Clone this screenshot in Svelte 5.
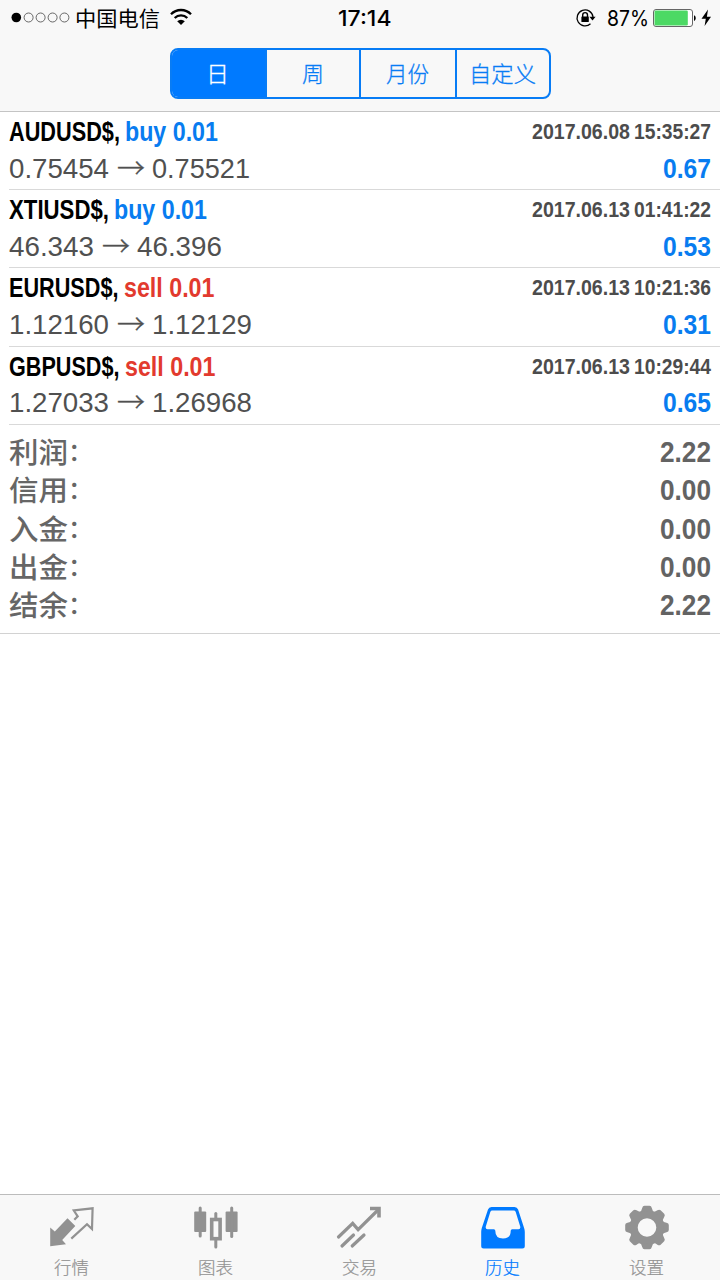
<script>
  const periods = [
    { label: '日', active: true, w: 23 },
    { label: '周', w: 22 },
    { label: '月份', w: 43 },
    { label: '自定义', w: 67 }
  ];
  const deals = [
    { symbol: 'AUDUSD$', side: 'buy', lot: '0.01', open: '0.75454', close: '0.75521', time: '2017.06.08 15:35:27', profit: '0.67', tw: 111, sw: 93, ow: 100, cw: 98, h: 78 },
    { symbol: 'XTIUSD$', side: 'buy', lot: '0.01', open: '46.343', close: '46.396', time: '2017.06.13 01:41:22', profit: '0.53', tw: 100, sw: 93, ow: 85, cw: 85, h: 78 },
    { symbol: 'EURUSD$', side: 'sell', lot: '0.01', open: '1.12160', close: '1.12129', time: '2017.06.13 10:21:36', profit: '0.31', tw: 109.5, sw: 90.5, ow: 100, cw: 100, h: 78.5 },
    { symbol: 'GBPUSD$', side: 'sell', lot: '0.01', open: '1.27033', close: '1.26968', time: '2017.06.13 10:29:44', profit: '0.65', tw: 110.5, sw: 90.5, ow: 100, cw: 100, h: 78.5 }
  ];
  const totals = [
    ['利润', '2.22'],
    ['信用', '0.00'],
    ['入金', '0.00'],
    ['出金', '0.00'],
    ['结余', '2.22']
  ];
  const tabs = [
    { id: 'quotes', label: '行情' },
    { id: 'chart', label: '图表' },
    { id: 'trade', label: '交易' },
    { id: 'history', label: '历史' },
    { id: 'settings', label: '设置' }
  ];
  const teeth = [0, 45, 90, 135, 180, 225, 270, 315];

  // Condenses a line of text horizontally so that it fills the given width.
  function condense(node, width) {
    const natural = node.getComputedTextLength();
    if (natural > 0) node.setAttribute('transform', `scale(${width / natural} 1)`);
  }
</script>

{#snippet fit(text, w, h, base, cls)}
  <svg class={cls} width={w} height={h}>
    <text x="0" y={base} use:condense={w}>{text}</text>
  </svg>
{/snippet}

<div class="screen">
  <header>
    <div class="status">
      <div class="side left">
        <svg width="60" height="36">
          <circle cx="5.3" cy="17.5" r="4.8" fill="#000" />
          {#each [17.6, 29.6, 41.6, 53.4] as x}
            <circle cx={x} cy="17.5" r="4.5" fill="none" stroke="#444" stroke-width=".8" />
          {/each}
        </svg>
        {@render fit('中国电信', 85, 36, 26, 'carrier')}
        <svg class="wifi" width="22" height="36" fill="none" stroke="#000" stroke-width="2.3">
          <path d="M1 14.2a14 14 0 0 1 20 0" />
          <path d="M4.7 18a8.9 8.9 0 0 1 12.6 0" />
          <path d="M7.2 21.2a5.4 5.4 0 0 1 7.6 0L11 25z" fill="#000" stroke="none" />
        </svg>
      </div>
      {@render fit('17:14', 53.5, 36, 26, 'clock')}
      <div class="side right">
        <svg width="20" height="36" fill="none" stroke="#000" stroke-width="1.3">
          <path d="M14.5 23.8A8 8 0 1 1 17 17" />
          <path d="M13.4 16.8h6.2l-3.1 3.8z" fill="#000" stroke="none" />
          <rect x="5.4" y="16.5" width="7.4" height="5.6" rx=".6" fill="#000" stroke="none" />
          <path d="M6.7 17v-2a2.4 2.4 0 0 1 4.8 0v2" stroke-width="1.4" />
        </svg>
        {@render fit('87%', 42, 36, 26, 'percent')}
        <svg class="battery" width="43" height="36">
          <rect x=".5" y="9.5" width="39" height="17" rx="2.5" fill="#fff" stroke="#666" />
          <rect x="1.5" y="10.5" width="33.3" height="15" rx="1.3" fill="#4cd964" />
          <path d="M41 15.2c2.3.7 2.3 5 0 5.7z" fill="#000" />
        </svg>
        <svg class="bolt" width="11" height="36"><path d="M7 9.5.5 18.8H4.8L3.6 26 10 16.7H5.9z" fill="#000" /></svg>
      </div>
    </div>
    <div class="segments">
      {#each periods as p}
        <div class="segment" class:active={p.active}>{@render fit(p.label, p.w, 46, 32, 'seg-label')}</div>
      {/each}
    </div>
  </header>

  <main>
    {#each deals as d}
      <div class="deal" style="height:{d.h}px">
        <div class="line top">
          <div class="heading">
            {@render fit(d.symbol + ',', d.tw, 38, 29.1, 'title')}
            {@render fit(d.side + ' ' + d.lot, d.sw, 38, 29.1, 'title ' + d.side)}
          </div>
          <div class="stamp">
            {@render fit(d.time.slice(0, 10), 98, 38, 27, 'time')}
            {@render fit(d.time.slice(11), 77, 38, 27, 'time')}
          </div>
        </div>
        <div class="line">
          <div class="prices">
            {@render fit(d.open, d.ow, 38, 27.8, 'price')}
            <svg class="arrow" width="28" height="38"><text x="0" y="29.2">→</text></svg>
            {@render fit(d.close, d.cw, 38, 27.8, 'price')}
          </div>
          {@render fit(d.profit, 48, 38, 27.8, 'profit')}
        </div>
      </div>
    {/each}
    <div class="totals">
      {#each totals as [name, value]}
        <div class="total">
          <div class="name">
            {@render fit(name, 59, 38, 28.2, 'label')}
            {@render fit('：', 25, 38, 26.2, 'label colon')}
          </div>
          {@render fit(value, 51, 38, 27.4, 'sum')}
        </div>
      {/each}
    </div>
  </main>

  <nav>
    {#each tabs as t}
      <div class="tab" class:selected={t.id === 'history'}>
        <svg width="46" height="46" viewBox="0 0 46 46">
          {#if t.id === 'quotes'}
            <path d="M1.2 23.5 5.8 27.4 18.5 14.3 26.3 22 13.2 36 17 40.2 1.2 42.3z" fill="currentColor" />
            <path d="M25.3 15.8 28.7 12.3 24.8 6.5 43.6 4.3 43 25 38 20.2 22.3 34.6" fill="none" stroke="currentColor" stroke-width="2.2" />
          {:else if t.id === 'chart'}
            <g fill="currentColor">
              <rect x="1.2" y="7.5" width="12" height="20.5" rx="1" />
              <rect x="5.7" y="2.5" width="3" height="31" rx="1.5" />
              <rect x="32.6" y="7.5" width="12" height="20.5" rx="1" />
              <rect x="37.2" y="2.5" width="3" height="31.5" rx="1.5" />
              <rect x="21.3" y="8" width="3" height="8" rx="1.5" />
              <rect x="21.3" y="34" width="3" height="10.5" rx="1.5" />
            </g>
            <rect x="18.7" y="15.5" width="8.4" height="19.2" fill="none" stroke="currentColor" stroke-width="3.6" />
          {:else if t.id === 'trade'}
            <g fill="none" stroke="currentColor" stroke-width="3.2" stroke-linecap="round">
              <path d="M2.5 33 16.7 19.4 22.1 25.6 42 6" stroke-linejoin="miter" />
              <path d="M34 4.5H43V13.5" stroke-width="3.6" stroke-linecap="butt" />
              <path d="M6 42 17.5 31M16.2 42 28 31" />
            </g>
          {:else if t.id === 'history'}
            <path fill-rule="evenodd" fill="currentColor" d="M11.5 3h23q2.7 0 3.6 2.5l6 18.5q.7 2 .7 4v14q0 2.5-2.5 2.5H3.7q-2.5 0-2.5-2.5V28q0-2 .6-4L8 5.5Q8.8 3 11.5 3zM12.3 6.5q-1.5 0-2 1.4L5.8 22.5q-.6 2.7 1.7 2.7h6.3q1.5 0 1.5 1.6 0 7.8 7.7 7.8t7.7-7.8q0-1.6 1.5-1.6h6.3q2.3 0 1.7-2.7L35.7 7.9q-.5-1.4-2-1.4z" />
          {:else}
            <g fill="currentColor" transform="translate(23 23.5)">
              {#each teeth as a}
                <path transform="rotate({a})" d="M-8-15Q-5.3-16-4.8-19.5-4.3-21.8-2.5-21.8h5Q4.3-21.8 4.8-19.5 5.3-16 8-15L6-10H-6z" />
              {/each}
              <circle r="12.8" fill="none" stroke="currentColor" stroke-width="7" />
            </g>
          {/if}
        </svg>
        {@render fit(t.label, 35, 28, 19, 'tab-label')}
      </div>
    {/each}
  </nav>
</div>

<style>
  :global(body) { margin: 0; background: #fff; }
  .screen {
    width: 720px; height: 1280px; display: flex; flex-direction: column;
    overflow: hidden; background: #fff;
    font-family: "Liberation Sans", "Noto Sans CJK SC", sans-serif;
  }
  svg { display: block; flex: none; overflow: visible; }
  header { box-sizing: border-box; height: 112px; background: #f8f8f8; border-bottom: 1px solid #c4c4c4; }
  .status { height: 36px; padding: 0 8.3px 0 11px; display: flex; justify-content: space-between; }
  .side { display: flex; width: 294px; }
  .side.left { width: 300px; }
  .side.right { justify-content: flex-end; }
  .carrier { font: 21px "Noto Sans CJK SC", sans-serif; margin-left: 4px; }
  .wifi { margin-left: 10px; }
  .clock { font: 500 21px Inter, sans-serif; }
  .percent { font: 21px Inter, sans-serif; margin: 0 4px 0 11px; }
  .bolt { margin-left: 5px; }
  .segments {
    box-sizing: border-box; width: 381px; height: 51px; margin: 12px auto 0; display: flex;
    border: 2px solid #087cf5; border-radius: 8px; overflow: hidden;
    background: #f8f8f8;
  }
  .segment { box-sizing: border-box; flex: 1 1 0; display: flex; justify-content: center; color: #087cf5; }
  .segment + .segment { border-left: 2px solid #087cf5; }
  .segment:first-child { flex: none; width: 93px; }
  .segment:nth-child(3) { flex: none; width: 96px; }
  .segment.active { background: #007aff; color: #fff; padding-right: 2px; }
  .seg-label { font: 300 22px "Noto Sans CJK SC", sans-serif; fill: currentColor; stroke: currentColor; stroke-width: .3px; }
  main { flex: 1; }
  .deal { box-sizing: border-box; margin-left: 9px; padding-right: 9px; border-bottom: 1px solid #d9d9d9; }
  .line { height: 38px; display: flex; justify-content: space-between; }
  .line.top { height: 37.5px; }
  .heading { display: flex; gap: 5px; }
  .stamp { display: flex; gap: 4.5px; }
  .title { font: bold 27px "Liberation Sans Narrow", "Liberation Sans", sans-serif; }
  .buy { fill: #087cf0; }
  .sell { fill: #e23a2e; }
  .time { font: bold 22.5px "Liberation Sans Narrow", "Liberation Sans", sans-serif; fill: #4c4c4c; }
  .prices { display: flex; gap: 7.5px; }
  .price { font: 28px "Liberation Sans", sans-serif; fill: #505050; }
  .arrow { font: 300 28px "Noto Sans CJK SC", sans-serif; fill: #505050; stroke: #505050; stroke-width: .3px; }
  .profit { font: bold 28px "Liberation Sans Narrow", "Liberation Sans", sans-serif; fill: #087cf0; }
  .totals { box-sizing: border-box; height: 209px; padding: 10px 9px 0; border-bottom: 1px solid #d2d2d2; }
  .total { height: 38.3px; display: flex; justify-content: space-between; }
  .name { display: flex; }
  .label { font: 500 29px "Noto Sans CJK SC", sans-serif; fill: #666; }
  .label.colon { font-size: 25px; }
  .sum { font: bold 29px "Liberation Sans Narrow", "Liberation Sans", sans-serif; fill: #636363; }
  nav { box-sizing: border-box; height: 86px; padding-right: 1.5px; display: flex; background: #f8f8f8; border-top: 1px solid #bcbcbc; }
  .tab { flex: 1; padding-top: 9px; display: flex; flex-direction: column; align-items: center; color: #929292; }
  .tab.selected { color: #007aff; }
  .tab-label { font: 300 17px "Noto Sans CJK SC", sans-serif; fill: currentColor; stroke: currentColor; stroke-width: .2px; margin-top: 5px; }
</style>
